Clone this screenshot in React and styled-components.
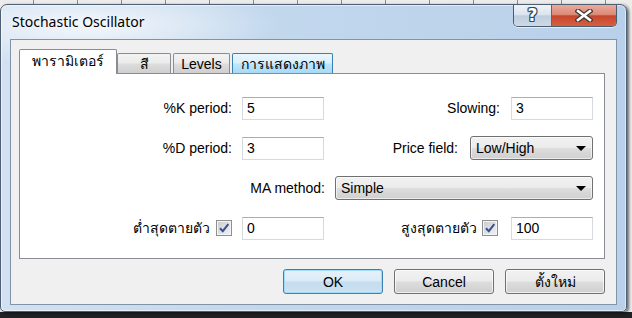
import React from "react";
import styled, { createGlobalStyle, css } from "styled-components";

const GlobalStyle = createGlobalStyle`
  html, body { margin: 0; padding: 0; }
  body {
    width: 632px; height: 318px; overflow: hidden;
    font-family: "Liberation Sans", "Noto Sans", "DejaVu Sans", sans-serif;
  }
  * { box-sizing: border-box; }
`;

const UI_FONT = `"Liberation Sans", "Noto Sans", "DejaVu Sans", sans-serif`;

const Desktop = styled.div`
  width: 632px;
  height: 318px;
  padding-top: 4px;
  background:
    linear-gradient(to bottom, transparent 312px, #1f2124 312px),
    repeating-linear-gradient(90deg, transparent 0 33px, #8a8a8a 33px 34px, transparent 34px 44px),
    #ececec;
`;

const Window = styled.div`
  width: 627px;
  height: 308px;
  border: 1px solid #4f5e70;
  border-radius: 7px 7px 5px 5px;
  background:
    radial-gradient(ellipse 190px 40px at 90px 20px, rgba(255, 255, 255, 0.75), rgba(255, 255, 255, 0) 100%),
    linear-gradient(90deg, #d2e1f1 0%, #c3d8ed 40%, #b8d0e9 100%);
  box-shadow: inset 0 0 0 1px rgba(255, 255, 255, 0.55), 2px 1px 3px rgba(0, 0, 0, 0.55);
  display: flex;
  flex-direction: column;
`;

const TitleBar = styled.div`
  height: 34px;
  flex-shrink: 0;
  display: flex;
  align-items: flex-start;
  justify-content: space-between;
  padding: 0 9px 0 11px;
`;

const Title = styled.div`
  font-family: "Noto Sans", "DejaVu Sans", sans-serif;
  font-size: 14px;
  line-height: 19px;
  margin-top: 7px;
  color: #000;
  text-shadow: 0 0 6px rgba(255, 255, 255, 0.9);
`;

const CaptionGroup = styled.div`
  display: flex;
  height: 22px;
  border: 1px solid #4d5c6c;
  border-top: none;
  border-radius: 0 0 5px 5px;
  overflow: hidden;
  box-shadow: 0 1px 0 rgba(255, 255, 255, 0.6);
`;

const CaptionButton = styled.div`
  display: flex;
  align-items: center;
  justify-content: center;
  width: ${(p) => p.$w}px;
  ${(p) =>
    p.$close
      ? css`
          background: linear-gradient(#eaaa9c 0%, #dd8a77 45%, #c7462d 52%, #d4603f 100%);
        `
      : css`
          background: linear-gradient(#eef3f8 0%, #dbe5ef 45%, #bfcddd 52%, #ccd9e7 100%);
          border-right: 1px solid #5a6979;
        `}
`;

const HelpGlyph = styled.span`
  font-family: "DejaVu Sans", sans-serif;
  font-weight: bold;
  font-size: 17px;
  line-height: 17px;
  color: #fff;
  text-shadow: 1px 0 #3a4757, -1px 0 #3a4757, 0 1px #3a4757, 0 -1px #3a4757,
    1px 1px #3a4757, -1px -1px #3a4757, 1px -1px #3a4757, -1px 1px #3a4757;
`;

const Client = styled.div`
  flex: 1;
  margin: 0 9px 6px 9px;
  border: 1px solid #8193a6;
  background: #f0f0f0;
  padding: 9px 11px 0 8px;
  display: flex;
  flex-direction: column;
`;

const TabStrip = styled.div`
  display: flex;
  align-items: flex-end;
  gap: 2px;
  padding-left: 2px;
  height: 25px;
  position: relative;
  z-index: 1;
`;

const Tab = styled.div`
  width: ${(p) => p.$w}px;
  height: 20px;
  margin-bottom: 1px;
  border: 1px solid #898c95;
  border-bottom: none;
  border-radius: 2px 2px 0 0;
  font-family: ${UI_FONT};
  font-size: 14px;
  color: #000;
  display: flex;
  align-items: center;
  justify-content: center;
  white-space: nowrap;
  background: linear-gradient(#f3f3f3 0%, #ebebeb 48%, #dddddd 52%, #cfcfcf 100%);
  ${(p) =>
    p.$hover &&
    css`
      border-color: #3c7fb1;
      background: linear-gradient(#eaf6fd 0%, #d9f0fc 48%, #bee6fd 52%, #a7d9f5 100%);
    `}
  ${(p) =>
    p.$active &&
    css`
      width: ${p.$w + 4}px;
      height: 25px;
      margin: 0 -2px;
      background: #fff;
      padding-bottom: 2px;
    `}
`;

const Panel = styled.div`
  height: 186px;
  margin-top: -1px;
  border: 1px solid #898c95;
  background: #fff;
  padding-top: 22px;
  display: flex;
  flex-direction: column;
  gap: 16px;
`;

const Row = styled.div`
  display: grid;
  grid-template-columns: ${(p) => p.$cols};
  height: 24px;
  align-items: center;
`;

const LabelCell = styled.div`
  display: flex;
  justify-content: flex-end;
  align-items: center;
  gap: ${(p) => p.$gap ?? 6}px;
  padding-right: ${(p) => p.$pr}px;
  font-family: ${UI_FONT};
  font-size: 14px;
  color: #000;
  white-space: nowrap;
`;

const TextBox = styled.input`
  width: 82px;
  height: 23px;
  border: 1px solid #d6d9de;
  border-top-color: #abadb3;
  background: #fff;
  padding: 0 0 0 4px;
  margin: 0;
  font-family: ${UI_FONT};
  font-size: 14px;
  color: #000;
  outline: none;
`;

const Select = styled.div`
  width: ${(p) => p.$w}px;
  height: 24px;
  border: 1px solid #707070;
  border-radius: 3px;
  background: linear-gradient(#f2f2f2 0%, #ebebeb 48%, #dddddd 52%, #cfcfcf 100%);
  box-shadow: inset 0 0 0 1px rgba(255, 255, 255, 0.6);
  display: flex;
  align-items: center;
  justify-content: space-between;
  padding: 0 6px 0 5px;
  font-family: ${UI_FONT};
  font-size: 14px;
  color: #000;
`;

const CheckBox = styled.span`
  width: 16px;
  height: 16px;
  border: 1px solid #8e8f8f;
  background: linear-gradient(135deg, #c9cbcf 0%, #e2e3e6 60%, #f3f3f3 100%);
  box-shadow: inset 0 0 0 1px #f4f4f4;
  display: flex;
  align-items: center;
  justify-content: center;
`;

const ButtonRow = styled.div`
  display: flex;
  justify-content: flex-end;
  gap: 11px;
  margin-top: 10px;
`;

const Button = styled.div`
  width: 100px;
  height: 25px;
  border: 1px solid #707070;
  border-radius: 3px;
  background: linear-gradient(#f2f2f2 0%, #ebebeb 48%, #dddddd 52%, #cfcfcf 100%);
  box-shadow: inset 0 0 0 1px rgba(255, 255, 255, 0.7);
  display: flex;
  align-items: center;
  justify-content: center;
  font-family: ${UI_FONT};
  font-size: 14px;
  color: #000;
  ${(p) =>
    p.$default &&
    css`
      border-color: #3c7fb1;
      background: linear-gradient(#e6f2fa 0%, #dbebf6 48%, #c4dcee 52%, #cde2f2 100%);
      box-shadow: inset 0 0 0 1px #9fdcfa;
    `}
`;

const Arrow = () => (
  <svg width="10" height="5" viewBox="0 0 10 5">
    <path d="M0 0H10L5 5Z" fill="#000" />
  </svg>
);

const Check = () => (
  <svg width="12" height="12" viewBox="0 0 12 12">
    <path d="M2 6.2 L4.8 9.2 L10.3 2.2" fill="none" stroke="#3c4f8e" strokeWidth="2" />
  </svg>
);

const CloseX = () => (
  <svg width="18" height="13" viewBox="0 0 18 13">
    <path d="M3 2 L15 11 M15 2 L3 11" stroke="#3b3b3b" strokeWidth="5" strokeLinecap="square" />
    <path d="M3 2 L15 11 M15 2 L3 11" stroke="#fff" strokeWidth="2.6" strokeLinecap="square" />
  </svg>
);

export default function App() {
  return (
    <>
      <GlobalStyle />
      <Desktop>
        <Window>
          <TitleBar>
            <Title>Stochastic Oscillator</Title>
            <CaptionGroup>
              <CaptionButton $w={38}>
                <HelpGlyph>?</HelpGlyph>
              </CaptionButton>
              <CaptionButton $w={64} $close>
                <CloseX />
              </CaptionButton>
            </CaptionGroup>
          </TitleBar>
          <Client>
            <TabStrip>
              <Tab $w={94} $active>พารามิเตอร์</Tab>
              <Tab $w={54}>สี</Tab>
              <Tab $w={57}>Levels</Tab>
              <Tab $w={101} $hover>การแสดงภาพ</Tab>
            </TabStrip>
            <Panel>
              <Row $cols="222px 82px 187px 82px">
                <LabelCell $pr={10}>%K period:</LabelCell>
                <TextBox readOnly value="5" />
                <LabelCell $pr={11}>Slowing:</LabelCell>
                <TextBox readOnly value="3" />
              </Row>
              <Row $cols="222px 82px 146px 123px">
                <LabelCell $pr={10}>%D period:</LabelCell>
                <TextBox readOnly value="3" />
                <LabelCell $pr={12}>Price field:</LabelCell>
                <Select $w={123}>
                  <span>Low/High</span>
                  <Arrow />
                </Select>
              </Row>
              <Row $cols="315px 258px">
                <LabelCell $pr={10}>MA method:</LabelCell>
                <Select $w={258}>
                  <span>Simple</span>
                  <Arrow />
                </Select>
              </Row>
              <Row $cols="222px 82px 187px 82px">
                <LabelCell $pr={10} $gap={6}>
                  <span>ต่ำสุดตายตัว</span>
                  <CheckBox>
                    <Check />
                  </CheckBox>
                </LabelCell>
                <TextBox readOnly value="0" />
                <LabelCell $pr={13} $gap={5}>
                  <span>สูงสุดตายตัว</span>
                  <CheckBox>
                    <Check />
                  </CheckBox>
                </LabelCell>
                <TextBox readOnly value="100" />
              </Row>
            </Panel>
            <ButtonRow>
              <Button $default>OK</Button>
              <Button>Cancel</Button>
              <Button>ตั้งใหม่</Button>
            </ButtonRow>
          </Client>
        </Window>
      </Desktop>
    </>
  );
}
